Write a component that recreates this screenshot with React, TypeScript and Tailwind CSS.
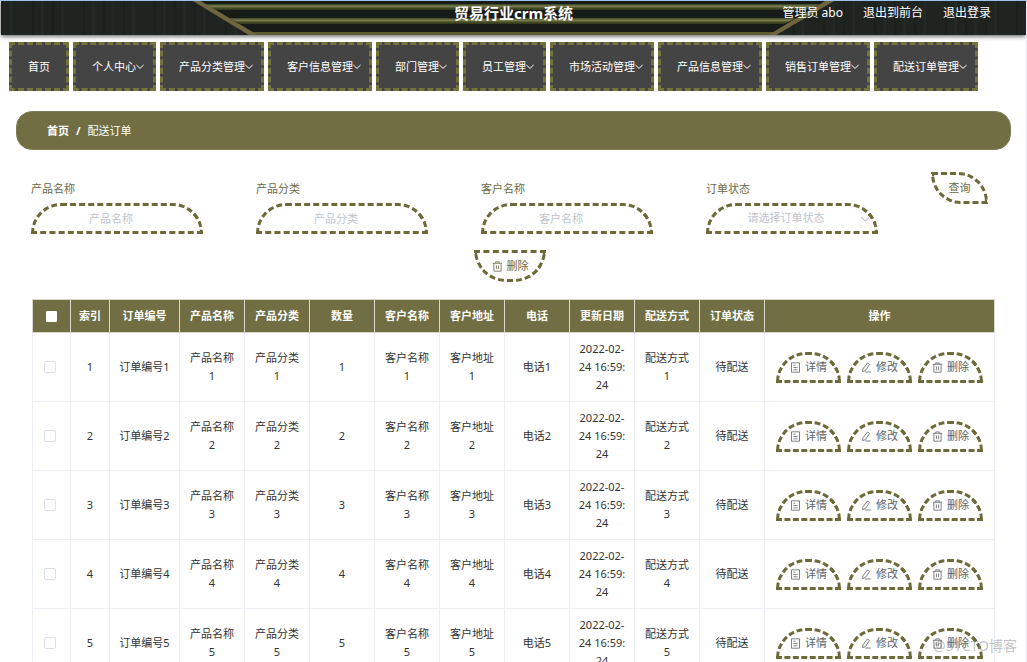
import type { ReactNode } from "react";

const NAV = [
  { label: "首页", width: "w-[60px]", menu: false },
  { label: "个人中心", width: "w-[83px]", menu: true },
  { label: "产品分类管理", width: "w-[104px]", menu: true },
  { label: "客户信息管理", width: "w-[104px]", menu: true },
  { label: "部门管理", width: "w-[83px]", menu: true },
  { label: "员工管理", width: "w-[83px]", menu: true },
  { label: "市场活动管理", width: "w-[104px]", menu: true },
  { label: "产品信息管理", width: "w-[104px]", menu: true },
  { label: "销售订单管理", width: "w-[104px]", menu: true },
  { label: "配送订单管理", width: "w-[104px]", menu: true },
];

const COLUMNS = [
  { title: "索引", width: "w-[39px]" },
  { title: "订单编号", width: "w-[70px]" },
  { title: "产品名称", width: "w-[65px]" },
  { title: "产品分类", width: "w-[65px]" },
  { title: "数量", width: "w-[65px]" },
  { title: "客户名称", width: "w-[65px]" },
  { title: "客户地址", width: "w-[65px]" },
  { title: "电话", width: "w-[65px]" },
  { title: "更新日期", width: "w-[65px]" },
  { title: "配送方式", width: "w-[65px]" },
  { title: "订单状态", width: "w-[65px]" },
  { title: "操作", width: "" },
];

const ORDERS = [1, 2, 3, 4, 5].map((n) => ({
  id: n,
  cells: [
    `${n}`,
    `订单编号${n}`,
    `产品名称${n}`,
    `产品分类${n}`,
    `${n}`,
    `客户名称${n}`,
    `客户地址${n}`,
    `电话${n}`,
    "2022-02-24 16:59:24",
    `配送方式${n}`,
    "待配送",
  ],
}));

function Chevron({ className }: { className: string }) {
  return (
    <svg viewBox="0 0 8 8" className={className} fill="none" stroke="currentColor" aria-hidden="true">
      <path d="M0.4 2 4 5.4 7.6 2" />
    </svg>
  );
}

function TrashIcon() {
  return (
    <svg viewBox="0 0 11 11" className="size-[11px] shrink-0" fill="none" stroke="currentColor" strokeWidth="0.8" aria-hidden="true">
      <path d="M0.8 2.3h9.4M3.7 2.2V0.9h3.6v1.3M1.9 2.4v7.8h7.2V2.4M4.4 4.4v3.8M6.6 4.4v3.8" />
    </svg>
  );
}

function DocumentIcon() {
  return (
    <svg viewBox="0 0 11 11" className="size-[11px] shrink-0" fill="none" stroke="currentColor" strokeWidth="0.8" aria-hidden="true">
      <path d="M1.5 0.8h8v9.4h-8zM3.4 3.2h2M3.4 5.5h4.2M3.4 7.8h4.2" />
    </svg>
  );
}

function EditIcon() {
  return (
    <svg viewBox="0 0 11 11" className="size-[11px] shrink-0" fill="none" stroke="currentColor" strokeWidth="0.8" aria-hidden="true">
      <path d="M6.4 1 8.6 2.4 4.6 8.4 1.6 9.7 1.9 6.9zM4.2 10h5.6" />
    </svg>
  );
}

function HeaderArt() {
  const planks = Array.from({ length: 44 }, (_, i) => i * 24 + ((i * 7) % 11));
  return (
    <svg viewBox="0 0 1026 34" preserveAspectRatio="none" className="absolute inset-0 size-full" aria-hidden="true">
      <defs>
        <linearGradient id="rail" x1="0" y1="0" x2="0" y2="1">
          <stop offset="0" stopColor="#3a3f20" />
          <stop offset="0.4" stopColor="#7c7f52" />
          <stop offset="0.65" stopColor="#4a5026" />
          <stop offset="1" stopColor="#2f351b" />
        </linearGradient>
      </defs>
      <rect width="1026" height="34" fill="#1f2421" />
      {planks.map((x) => (
        <rect key={x} x={x} width="2" height="34" fill="#171c19" opacity="0.5" />
      ))}
      {planks.map((x) => (
        <rect key={x} x={x + 9} width="3" height="34" fill="#272d29" opacity="0.5" />
      ))}
      <path d="M193 0H832L770 34H252z" fill="#181c18" />
      <path d="M204 3H820L808 9H215z" fill="url(#rail)" />
      <path d="M228 17H796L784 23H240z" fill="url(#rail)" />
      <path d="M248 31H776L770 34H254z" fill="#5c5c31" />
      <path d="M192 0H200L257 34H248z" fill="#6f6640" />
      <path d="M834 0H825L768 34H776z" fill="#6f6640" />
    </svg>
  );
}

function RowButton({ icon, children }: { icon: ReactNode; children: ReactNode }) {
  return (
    <button
      type="button"
      className="flex h-[31px] w-[65px] items-center justify-center gap-1 rounded-t-[30px] border-[3px] border-dashed border-[#6b6a38] text-[#606266]"
    >
      {icon}
      {children}
    </button>
  );
}

const FIELD =
  "block h-[31px] w-[172px] rounded-t-[30px] border-[3px] border-dashed border-[#6b6a38] bg-transparent pr-3 text-center text-[11px] outline-none";

export default function App() {
  return (
    <div className="relative h-screen overflow-hidden border-t border-r border-t-[#9cc3ea] border-r-[#ececf0] bg-white font-['Noto_Sans','Noto_Sans_CJK_SC',sans-serif] text-[11px] text-[#333]">
      <header className="relative ml-px h-[34px] shadow-[0_1px_5px_rgba(0,0,0,0.7)]">
        <HeaderArt />
        <div className="relative grid h-6 grid-cols-[1fr_auto_1fr] items-center text-white">
          <h1 className="col-start-2 text-[15px] font-bold">贸易行业crm系统</h1>
          <div className="flex justify-end gap-5 pr-[35px] text-[12px]">
            <span>管理员 abo</span>
            <a href="#front">退出到前台</a>
            <a href="#logout">退出登录</a>
          </div>
        </div>
      </header>

      <nav className="mt-[7px] ml-[9px] flex gap-1 text-white">
        {NAV.map((item) => (
          <a
            key={item.label}
            href="#nav"
            className={`flex h-[49px] shrink-0 items-center whitespace-nowrap border-[3px] border-dashed border-[#74733b] bg-[#444] pt-[2px] pl-[16px] ${item.width}`}
          >
            {item.label}
            {item.menu && <Chevron className="mb-px size-2 shrink-0" />}
          </a>
        ))}
      </nav>

      <div className="mt-5 mr-[15px] ml-4 flex h-[39px] items-center gap-[7px] rounded-[16px] border border-[#7f7d55] bg-[#706e42] pt-[2px] pl-[30px] text-white">
        <a href="#home" className="font-bold">首页</a>
        <span className="font-bold">/</span>
        <span>配送订单</span>
      </div>

      <form className="mt-[22px] grid grid-cols-[225px_225px_225px_225px_auto] justify-start pl-[31px] text-[#6b6a48]">
        {["产品名称", "产品分类", "客户名称"].map((label) => (
          <div key={label} className="pt-2">
            <label htmlFor={label} className="block h-[23px] leading-[18px]">{label}</label>
            <input id={label} placeholder={label} className={`${FIELD} placeholder:text-[#c0c4cc]`} />
          </div>
        ))}
        <div className="pt-2">
          <label htmlFor="status" className="block h-[23px] leading-[18px]">订单状态</label>
          <div className="relative w-[172px] text-[#c0c4cc]">
            <select id="status" className={`${FIELD} appearance-none`}>
              <option>请选择订单状态</option>
            </select>
            <Chevron className="pointer-events-none absolute top-3 right-2 size-[9px]" />
          </div>
        </div>
        <button type="submit" className="h-8 w-[57px] rounded-tr-[30px] rounded-bl-[30px] border-[3px] border-dashed border-[#6b6a38]">
          查询
        </button>
      </form>

      <div className="mt-4 flex justify-center pr-[6px]">
        <button
          type="button"
          className="flex h-8 w-[72px] items-center justify-center gap-1 rounded-b-[36px] border-[3px] border-dashed border-[#6b6a38] text-[#6b6a48]"
        >
          <TrashIcon />
          删除
        </button>
      </div>

      <div className="mt-[17px] mr-[31px] ml-8">
        <table className="w-full table-fixed border-collapse text-center leading-[18px]">
          <thead>
            <tr className="h-[33px] bg-[#706e42] text-white">
              <th className="w-[38px] border border-[#d8d8cf]">
                <input type="checkbox" aria-label="全选" className="mx-auto block size-[11px] appearance-none rounded-[1px] bg-white" />
              </th>
              {COLUMNS.map((column) => (
                <th key={column.title} className={`border border-[#d8d8cf] font-bold ${column.width}`}>{column.title}</th>
              ))}
            </tr>
          </thead>
          <tbody>
            {ORDERS.map((order) => (
              <tr key={order.id} className="h-[69px]">
                <td className="border border-[#ebeef5] pr-[3px]">
                  <input
                    type="checkbox"
                    aria-label={`选择订单${order.id}`}
                    className="mx-auto block size-3 appearance-none rounded-[2px] border border-[#dcdfe6] bg-white"
                  />
                </td>
                {order.cells.map((cell, i) => (
                  <td key={i} className="border border-[#ebeef5] px-[7px] break-all">{cell}</td>
                ))}
                <td className="border border-[#ebeef5]">
                  <div className="flex justify-center gap-[6px]">
                    <RowButton icon={<DocumentIcon />}>详情</RowButton>
                    <RowButton icon={<EditIcon />}>修改</RowButton>
                    <RowButton icon={<TrashIcon />}>删除</RowButton>
                  </div>
                </td>
              </tr>
            ))}
          </tbody>
        </table>
      </div>

      <span className="absolute right-[9px] bottom-[6px] text-[14px] leading-5 text-[#888]/50">@51CTO博客</span>
    </div>
  );
}
